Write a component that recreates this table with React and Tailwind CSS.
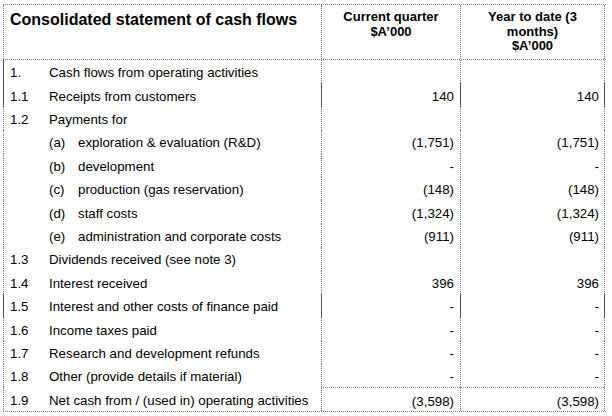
import React from 'react';

const rows = [
  { n: '1.', label: 'Cash flows from operating activities', darkLeft: true },
  { n: '1.1', label: 'Receipts from customers', a: '140', b: '140', dark: true, darkLeft: true },
  { n: '1.2', label: 'Payments for' },
  { sub: '(a)', label: 'exploration & evaluation (R&D)', a: '(1,751)', b: '(1,751)' },
  { sub: '(b)', label: 'development', a: '-', b: '-' },
  { sub: '(c)', label: 'production (gas reservation)', a: '(148)', b: '(148)' },
  { sub: '(d)', label: 'staff costs', a: '(1,324)', b: '(1,324)' },
  { sub: '(e)', label: 'administration and corporate costs', a: '(911)', b: '(911)' },
  { n: '1.3', label: 'Dividends received (see note 3)' },
  { n: '1.4', label: 'Interest received', a: '396', b: '396' },
  { n: '1.5', label: 'Interest and other costs of finance paid', a: '-', b: '-', dark: true, darkLeft: true },
  { n: '1.6', label: 'Income taxes paid', a: '-', b: '-' },
  { n: '1.7', label: 'Research and development refunds', a: '-', b: '-' },
  { n: '1.8', label: 'Other (provide details if material)', a: '-', b: '-' },
];

const DOT = 'border-l border-dotted border-l-[#7a7a7a]';
const DARK = 'border-l border-solid border-l-[#555]';

const Row = ({ r, last }) => {
  const sep = r.dark ? DARK : DOT;
  return (
    <div className={`flex ${last ? 'h-[24px]' : 'h-[23.4px]'}`}>
      <div className={`w-[318px] h-full flex items-center pt-[3px] pl-[6px] ${r.darkLeft ? DARK : DOT}`}>
        {r.sub ? (
          <>
            <span className="w-[39px]"></span>
            <span className="w-[29px]">{r.sub}</span>
            <span>{r.label}</span>
          </>
        ) : (
          <>
            <span className="w-[39px]">{r.n}</span>
            <span>{r.label}</span>
          </>
        )}
      </div>
      <div className={`w-[139px] h-full flex items-center justify-end pt-[3px] pr-[6px] ${sep} ${last ? 'border-t border-t-[#8a8a8a]' : ''}`}>
        {r.a}
      </div>
      <div className={`w-[144px] h-full flex items-center justify-end pt-[3px] pr-[5px] ${sep} ${last ? 'border-t border-t-[#8a8a8a]' : ''}`}>
        {r.b}
      </div>
      <div className={`h-full ${sep}`}></div>
    </div>
  );
};

export default function App() {
  return (
    <div className="w-[612px] h-[416px] bg-white pt-[4px] pl-[3px]" style={{ fontFamily: '"Liberation Sans", Arial, sans-serif' }}>
      <div className="w-[603px] text-[13.3px] text-black">
        {/* header */}
        <div className="flex h-[56px] border-t border-b border-dotted border-[#7a7a7a]">
          <div className={`w-[318px] ${DOT} pl-[6px] pt-[3px] font-bold text-[16px]`}>
            Consolidated statement of cash flows
          </div>
          <div className={`w-[139px] ${DOT} pt-[5px] text-center font-bold text-[13px] leading-[14.5px]`}>
            Current quarter
            <br />
            $A’000
          </div>
          <div className={`w-[144px] ${DOT} pt-[5px] text-center font-bold text-[13px] leading-[14.5px]`}>
            Year to date (3
            <br />
            months)
            <br />
            $A’000
          </div>
          <div className={DOT}></div>
        </div>
        {rows.map((r, i) => (
          <Row key={i} r={r} />
        ))}
        <div className="border-b border-dotted border-b-[#7a7a7a]">
          <Row r={{ n: '1.9', label: 'Net cash from / (used in) operating activities', a: '(3,598)', b: '(3,598)' }} last />
        </div>
      </div>
    </div>
  );
}
